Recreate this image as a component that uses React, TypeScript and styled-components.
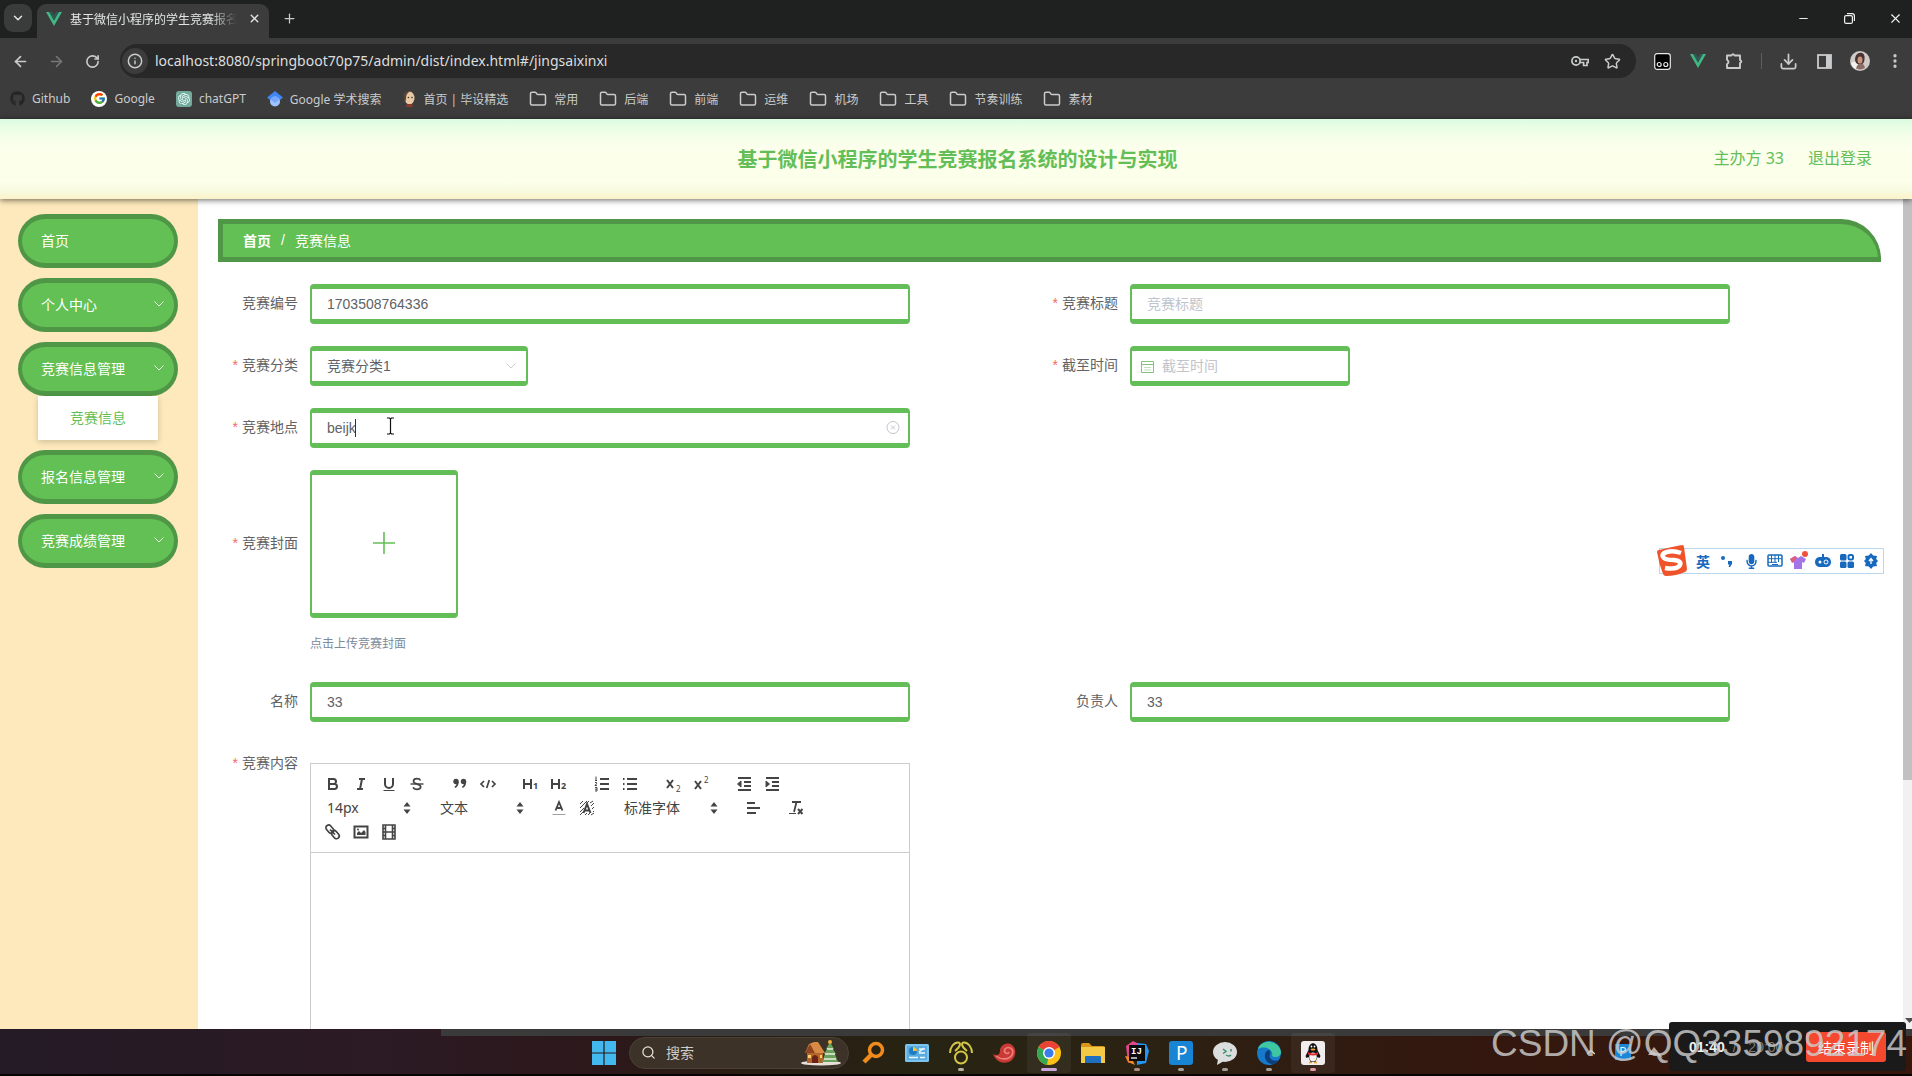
import React from "react";
import styled, { createGlobalStyle } from "styled-components";
import {
  ArrowLeft, ArrowRight, ChevronDown, ChevronUp, Download, Folder, Info, Minus, MoreVertical, Plus, RotateCw, Search, X, Star,
} from "lucide-react";
import { FaGithub, FaMicrophone } from "react-icons/fa";
import { FcGoogle } from "react-icons/fc";
import { SiOpenai } from "react-icons/si";

const GREEN = "#64be57";
const DARK_GREEN = "#4f9746";
const UI_FONT = `"Noto Sans", "Noto Sans CJK SC", sans-serif`;
const PAGE_FONT = `"Liberation Sans", "Noto Sans CJK SC", sans-serif`;

const Global = createGlobalStyle`
  *, *::before, *::after { box-sizing: border-box; }
  body { margin: 0; font-family: ${PAGE_FONT}; font-size: 14px; overflow: hidden; }
  button, input, select { font: inherit; margin: 0; }
  button { border: 0; padding: 0; background: none; color: inherit; cursor: pointer; }
  a { color: inherit; text-decoration: none; }
  svg { display: block; flex: none; }
`;

const Screen = styled.div`
  position: relative;
  display: flex;
  flex-direction: column;
  height: 100vh;
  overflow: hidden;
  background: #fff;
`;

/* ---------- browser chrome ---------- */

const Chrome = styled.header`
  flex: none;
  background: #3c3c3c;
  color: #c9cbcc;
  font-family: ${UI_FONT};
  font-size: 12px;
`;

const TabStrip = styled.div`
  display: flex;
  align-items: flex-end;
  height: 38px;
  padding: 0 9px 0 4px;
  background: #1f2020;
`;

const TabSearch = styled.button`
  display: grid;
  place-items: center;
  align-self: flex-start;
  width: 28px;
  height: 28px;
  margin: 4px 5px 0 0;
  border-radius: 9px;
  background: #3a3b3b;
  color: #e6e6e6;
`;

const Tab = styled.div`
  display: flex;
  align-items: center;
  width: 232px;
  height: 34px;
  padding: 0 8px 5px 9px;
  border-radius: 9px 9px 0 0;
  background: #3c3c3c;
  color: #e4e6e6;
`;

const TabTitle = styled.span`
  flex: 1;
  margin: 0 10px 0 8px;
  overflow: hidden;
  white-space: nowrap;
  mask-image: linear-gradient(90deg, #000 84%, transparent);
`;

const PlainButton = styled.button<{ $w?: number }>`
  display: grid;
  place-items: center;
  width: ${(p) => p.$w ?? 16}px;
  height: 28px;
`;

const StripButtons = styled.div`
  display: flex;
  align-items: center;
  height: 34px;
  padding: 0 0 6px 12px;
`;

const WindowButtons = styled(StripButtons)`
  gap: 30px;
  margin-left: auto;
  color: #f0f0f0;
`;

const Toolbar = styled.div`
  display: flex;
  align-items: center;
  height: 46px;
  padding-left: 2px;
`;

const Omnibox = styled.div`
  display: flex;
  align-items: center;
  flex: 1;
  height: 34px;
  margin: 0 8px 0 10px;
  padding: 0 8px 0 2px;
  border-radius: 17px;
  background: #282828;
`;

const SiteInfo = styled.button`
  display: grid;
  place-items: center;
  width: 26px;
  height: 26px;
  margin-right: 7px;
  border-radius: 13px;
  background: #3c3c3c;
`;

const Address = styled.input`
  flex: 1;
  min-width: 0;
  border: 0;
  outline: 0;
  padding: 0 0 2px;
  background: none;
  color: #dcdedf;
  font-family: ${UI_FONT};
  font-size: 14px;
`;

const Divider = styled.span`
  width: 1px;
  height: 16px;
  margin: 0 8px 0 9px;
  background: #5d5e5f;
`;

const Bookmarks = styled.nav`
  display: flex;
  align-items: center;
  gap: 21px;
  height: 35px;
  padding: 0 10px 6px;
`;

const Bookmark = styled.a`
  display: flex;
  align-items: center;
  gap: 7px;
  white-space: nowrap;
`;

const VueLogo = ({ size = 16 }: { size?: number }) => (
  <svg width={size} height={size} viewBox="0 0 16 16">
    <path d="M0 1h3.2L8 9.4 12.8 1H16L8 15z" fill="#41b883" />
    <path d="M3.2 1H6l2 3.4L10 1h2.8L8 9.4z" fill="#2f5a55" />
  </svg>
);

const ScholarLogo = () => (
  <svg width="16" height="16" viewBox="0 0 16 16">
    <path d="M8 0L0 6.5 3 9h10l3-2.5z" fill="#4285f4" />
    <circle cx="8" cy="10.5" r="5" fill="#a0c3ff" />
    <path d="M3.4 8.6a5 5 0 019.2 0L8 12z" fill="#76a7fa" />
  </svg>
);

const FaceLogo = () => (
  <svg width="14" height="16" viewBox="1 0 14 16">
    <ellipse cx="8.5" cy="7" rx="5" ry="6.5" fill="#e8c9a4" />
    <path d="M3 8C1 2 6-1 9 .6 6 2 5 4 5 8l-1 4z" fill="#5a4433" />
    <path d="M5 16l1-3h5l1 3z" fill="#8a3a2c" />
    <circle cx="7.4" cy="6.5" r=".8" fill="#3d2c22" />
    <circle cx="11" cy="6.5" r=".8" fill="#3d2c22" />
  </svg>
);

const IconTile = styled.span<{ $bg: string; $round?: boolean }>`
  display: grid;
  place-items: center;
  width: 16px;
  height: 16px;
  border-radius: ${(p) => (p.$round ? 8 : 3)}px;
  background: ${(p) => p.$bg};
  color: #e9fff7;
`;

const folders = ["常用", "后端", "前端", "运维", "机场", "工具", "节奏训练", "素材"];

const BrowserChrome = () => (
  <Chrome>
    <TabStrip>
      <TabSearch aria-label="搜索标签页"><ChevronDown size={14} strokeWidth={2.5} /></TabSearch>
      <Tab>
        <VueLogo />
        <TabTitle>基于微信小程序的学生竞赛报名</TabTitle>
        <PlainButton aria-label="关闭标签页" $w={14}><X size={13} strokeWidth={2.5} /></PlainButton>
      </Tab>
      <StripButtons>
        <PlainButton aria-label="新标签页"><Plus size={15} /></PlainButton>
      </StripButtons>
      <WindowButtons>
        <PlainButton aria-label="最小化"><Minus size={13} strokeWidth={1.8} /></PlainButton>
        <PlainButton aria-label="还原">
          <svg width="11" height="11" viewBox="0 0 11 11" fill="none" stroke="currentColor" strokeWidth="1.2">
            <rect x=".6" y="2.6" width="7.8" height="7.8" rx="1.5" />
            <path d="M3 .6h5a2.4 2.4 0 012.4 2.4v5" />
          </svg>
        </PlainButton>
        <PlainButton aria-label="关闭"><X size={15} strokeWidth={1.8} /></PlainButton>
      </WindowButtons>
    </TabStrip>
    <Toolbar>
      <PlainButton aria-label="后退" $w={36}><ArrowLeft size={17} strokeWidth={2.4} /></PlainButton>
      <PlainButton aria-label="前进" $w={36}><ArrowRight size={17} strokeWidth={2.2} color="#767778" /></PlainButton>
      <PlainButton aria-label="刷新" $w={36}><RotateCw size={15} strokeWidth={2.6} /></PlainButton>
      <Omnibox>
        <SiteInfo aria-label="网站信息"><Info size={16} strokeWidth={2.2} /></SiteInfo>
        <Address aria-label="地址栏" defaultValue="localhost:8080/springboot70p75/admin/dist/index.html#/jingsaixinxi" />
        <PlainButton aria-label="密码" $w={32}>
          <svg width="18" height="12" viewBox="0 0 18 12" fill="none" stroke="currentColor" strokeWidth="1.7">
            <circle cx="5" cy="6" r="4.1" />
            <circle cx="5" cy="6" r="1.2" fill="currentColor" stroke="none" />
            <path d="M9 4.5h8.2v3H16v3h-3.4v-3H9" />
          </svg>
        </PlainButton>
        <PlainButton aria-label="收藏" $w={32}><Star size={17} strokeWidth={2.1} /></PlainButton>
      </Omnibox>
      <PlainButton aria-label="脚本扩展" $w={36}>
        <svg width="17" height="17" viewBox="0 0 17 17">
          <rect x=".7" y=".7" width="15.6" height="15.6" rx="2.5" fill="#000" stroke="#e8e8e8" strokeWidth="1.2" />
          <g fill="none" stroke="#e8e8e8" strokeWidth="1.2"><circle cx="5.2" cy="11.5" r="2" /><circle cx="11.8" cy="11.5" r="2" /></g>
        </svg>
      </PlainButton>
      <PlainButton aria-label="Vue 开发工具" $w={36}><VueLogo /></PlainButton>
      <PlainButton aria-label="扩展程序" $w={36}>
        <svg width="18" height="18" viewBox="0 0 18 18" fill="none" stroke="currentColor" strokeWidth="1.9" strokeLinejoin="round">
          <path d="M2 3.500h4.500Q8 .8 9.500 3.500H15V8q2.700 1.500 0 3V16H2v-3.700q3-2.300 0-4.600z" />
        </svg>
      </PlainButton>
      <Divider />
      <PlainButton aria-label="下载" $w={36}><Download size={19} strokeWidth={2.2} /></PlainButton>
      <PlainButton aria-label="侧边栏" $w={36}>
        <svg width="15" height="15" viewBox="0 0 15 15"><rect x="1" y="1" width="13" height="13" fill="none" stroke="currentColor" strokeWidth="1.8" /><path d="M9 1h5v13H9z" fill="currentColor" /></svg>
      </PlainButton>
      <PlainButton aria-label="用户" $w={36}>
        <svg width="20" height="20" viewBox="0 0 20 20">
          <circle cx="10" cy="10" r="10" fill="#cfc9c7" />
          <path d="M1 12q4-3 7 1l1 6q-6-1-8-7z" fill="#f4f1f0" />
          <path d="M5 9c0-5 3-8 7-7 3 1 3 5 2 9l-3 4-5-3z" fill="#4a3431" />
          <ellipse cx="10" cy="9" rx="2.500" ry="3.500" fill="#c99581" />
          <path d="M6 17.500c1-4 3-5 5-5s3 1 4 4.500a10 10 0 01-9 .5z" fill="#8b6c68" />
        </svg>
      </PlainButton>
      <PlainButton aria-label="菜单" $w={34}><MoreVertical size={18} strokeWidth={2.4} /></PlainButton>
    </Toolbar>
    <Bookmarks aria-label="书签">
      <Bookmark href="#"><FaGithub size={15} color="#232526" />Github</Bookmark>
      <Bookmark href="#"><IconTile $bg="#fff" $round><FcGoogle size={13} /></IconTile>Google</Bookmark>
      <Bookmark href="#"><IconTile $bg="#74aa9c"><SiOpenai size={12} /></IconTile>chatGPT</Bookmark>
      <Bookmark href="#"><ScholarLogo />Google 学术搜索</Bookmark>
      <Bookmark href="#"><FaceLogo />首页 | 毕设精选</Bookmark>
      {folders.map((f) => (
        <Bookmark href="#" key={f}><Folder size={18} strokeWidth={2} />{f}</Bookmark>
      ))}
    </Bookmarks>
  </Chrome>
);

/* ---------- admin page ---------- */

const Banner = styled.header`
  position: relative;
  z-index: 1;
  display: grid;
  grid-template-columns: 1fr auto 1fr;
  align-items: center;
  flex: none;
  height: 80px;
  padding: 2px 40px 0 43px;
  background: linear-gradient(180deg, #dbfbe0 0, #e8fee5 8px, #f4feea 18px, #fbffeb 28px, #fcffea 62px, #f8fae0 72px, #fcf2c8 80px);
  box-shadow: 0 1px 6px rgba(0, 0, 0, 0.6);
  color: ${GREEN};
  font-family: ${UI_FONT};
`;

const BannerTitle = styled.h1`
  grid-column: 2;
  margin: 0;
  font-size: 20px;
  line-height: 28px;
`;

const BannerLinks = styled.div`
  display: flex;
  justify-content: flex-end;
  gap: 24px;
  font-size: 16px;
  line-height: 24px;
  padding-bottom: 4px;
`;

const Page = styled.div`
  display: flex;
  flex: 1;
  min-height: 0;
`;

const Sidebar = styled.nav`
  display: flex;
  flex-direction: column;
  gap: 10px;
  flex: none;
  width: 198px;
  padding: 15px 20px 0 18px;
  background: #fde9bc;
`;

const MenuButton = styled.button`
  display: flex;
  align-items: center;
  justify-content: space-between;
  width: 100%;
  height: 54px;
  padding: 0 9px 2px 19px;
  border: solid ${DARK_GREEN};
  border-width: 5px 4px;
  border-radius: 30px;
  background: #62c054;
  color: #fff;
`;

const SubMenu = styled.a`
  display: block;
  width: 120px;
  margin: 0 auto;
  line-height: 44px;
  background: #fff;
  box-shadow: 0 2px 6px rgba(0, 0, 0, 0.18);
  color: ${GREEN};
  text-align: center;
`;

const Main = styled.main`
  flex: 1;
  min-width: 0;
  overflow: hidden;
  padding: 20px 22px 0 20px;
`;

const Breadcrumb = styled.nav`
  display: flex;
  align-items: center;
  height: 43px;
  padding: 0 0 2px 20px;
  border: solid ${DARK_GREEN};
  border-width: 5px 3px 5px 5px;
  border-radius: 0 40px 0 0;
  background: #62c054;
  color: #fff;
`;

const Slash = styled.span`
  margin: 0 10px;
`;

const Form = styled.form`
  display: grid;
  grid-template-columns: 1fr 1fr;
  row-gap: 22px;
  padding: 22px 11px 0 12px;
`;

const Item = styled.div<{ $wide?: boolean }>`
  display: grid;
  grid-template-columns: 80px 1fr;
  grid-column: ${(p) => (p.$wide ? "1 / -1" : "auto")};
`;

const Label = styled.label<{ $required?: boolean; $line?: number }>`
  padding-right: 12px;
  color: #606266;
  line-height: ${(p) => p.$line ?? 38}px;
  text-align: right;
  white-space: nowrap;
  &::before {
    content: ${(p) => (p.$required ? '"*"' : "none")};
    margin-right: 4px;
    color: #f56c6c;
  }
`;

const boxed = `
  border: solid ${GREEN};
  border-width: 5px 2px;
  border-radius: 4px;
  background: #fff;
  color: #606266;
`;

const Field = styled.div<{ $w?: number }>`
  position: relative;
  width: ${(p) => p.$w ?? 600}px;
  max-width: 100%;
  color: #c0c4cc;
`;

const Input = styled.input<{ $icon?: boolean }>`
  ${boxed}
  display: block;
  width: 100%;
  height: 40px;
  padding: 0 15px 0 ${(p) => (p.$icon ? 30 : 15)}px;
  outline: 0;
  &::placeholder { color: #c0c4cc; }
`;

const Select = styled.select`
  ${boxed}
  display: block;
  width: 100%;
  height: 40px;
  padding: 0 30px 0 15px;
  appearance: none;
`;

const Overlay = styled.span<{ $left?: number; $right?: number }>`
  position: absolute;
  top: 0;
  bottom: 0;
  left: ${(p) => (p.$left === undefined ? "auto" : `${p.$left}px`)};
  right: ${(p) => (p.$right === undefined ? "auto" : `${p.$right}px`)};
  display: grid;
  place-items: center;
  pointer-events: none;
`;

const Upload = styled.button`
  ${boxed}
  display: grid;
  place-items: center;
  width: 148px;
  height: 148px;
  color: ${GREEN};
`;

const Tip = styled.p`
  margin: 12px 0 2px;
  color: #7d8a99;
  font-size: 12px;
  line-height: 28px;
`;

const Editor = styled.div`
  width: 600px;
  max-width: 100%;
  height: 400px;
  margin-top: 19px;
  border: 1px solid #ccc;
`;

const EditorBar = styled.div`
  display: flex;
  flex-wrap: wrap;
  padding: 8px;
  border-bottom: 1px solid #ccc;
  color: #444;
  font-family: ${UI_FONT};
`;

const Formats = styled.span`
  display: flex;
  margin-right: 15px;
`;

const Tool = styled.button`
  display: grid;
  place-items: center;
  width: 28px;
  height: 24px;
`;

const Picker = styled.span<{ $w: number }>`
  position: relative;
  width: ${(p) => p.$w}px;
  height: 24px;
`;

const PickerSelect = styled.select`
  display: block;
  width: 100%;
  height: 24px;
  padding: 0 20px 2px 8px;
  border: 0;
  background: none;
  color: #444;
  appearance: none;
`;

const glyph = { fontFamily: "Noto Sans, sans-serif", fill: "#444", stroke: "none" };

const toolArt: Record<string, React.ReactNode> = {
  粗体: <><path d="M5 4h4.5a2.5 2.5 0 010 5H5zM5 9h5.5a2.5 2.5 0 010 5H5z" /></>,
  斜体: <><path d="M7 4h6M5 14h6M8 14l2-10" /></>,
  下划线: <><path d="M5 3v6a4 4 0 008 0V3" /><path d="M3.5 15.5h11" strokeWidth="1" /></>,
  删除线: <><path d="M2.5 9h13" strokeWidth="1.4" /><path d="M12.5 5.5C12 4.3 10.5 3.7 9 3.7c-2 0-3.5 1-3.5 2.6C5.5 8 7.5 8.5 9 9s3.7 1 3.7 2.8c0 1.6-1.7 2.6-3.7 2.6-1.8 0-3.3-.7-3.8-2.2" strokeWidth="1.7" /></>,
  引用: <g fill="#444" stroke="none"><circle cx="5" cy="6.5" r="2.7" /><circle cx="12.5" cy="6.5" r="2.7" /><path d="M7.7 6.5c0 3-1 5.5-3.5 6.5l-.8-1.2C5 11 5.700 9.500 5.500 7.500zM15.200 6.500c0 3-1 5.500-3.500 6.500l-.8-1.200c1.600-.8 2.300-2.300 2.100-4.300z" /></g>,
  代码: <><path d="M5 6L2 9l3 3M13 6l3 3-3 3M10.3 5l-2.6 8" strokeWidth="1.7" /></>,
  标题1: <><path d="M2 4v10M9 4v10M2 9h7" /><text x="11" y="14" fontSize="9" fontWeight="700" style={glyph}>1</text></>,
  标题2: <><path d="M2 4v10M9 4v10M2 9h7" /><text x="11" y="14" fontSize="9" fontWeight="700" style={glyph}>2</text></>,
  有序列表: <><path d="M7 4h9M7 9h9M7 14h9" /><path d="M3 1.500v4M2 5.500h2M2 7.500h1.500v1.200L2 10.500h2M2 12.500h2v3.500H2M2 14.200h2" strokeWidth="1" /></>,
  无序列表: <><path d="M6 4h10M6 9h10M6 14h10M2 4h1.5M2 9h1.5M2 14h1.5" /></>,
  下标: <><path d="M3 5l6 8M9 5l-6 8" /><text x="12" y="17" fontSize="8" style={glyph}>2</text></>,
  上标: <><path d="M3 6l6 8M9 6l-6 8" /><text x="12" y="8" fontSize="8" style={glyph}>2</text></>,
  减少缩进: <><path d="M3 3h13M9 7h7M9 11h7M3 15h13" /><path d="M6 6v6L2.5 9z" fill="#444" strokeWidth="1" /></>,
  增加缩进: <><path d="M3 3h13M9 7h7M9 11h7M3 15h13" /><path d="M3 6v6l3.5-3z" fill="#444" strokeWidth="1" /></>,
  字体颜色: <><path d="M5.5 11.5L9 3l3.5 8.500M6.500 9h5" strokeWidth="1.8" /><path d="M2.5 15.500h13" strokeWidth="1" opacity=".5" /></>,
  背景颜色: <><path d="M2 5l3-3M2 9l7-7M2 13l4-4M2 16l3-3M9 4l2-2M12 4l3-2M13 7l3-3M14 10l2-2M15 13l1-1M7 16l2-2M10 16l2-2M13 16l3-2" strokeWidth="1" /><path d="M5.5 14L9 5l3.5 9M6.500 11.500h5" strokeWidth="2" /></>,
  对齐: <path d="M3 4h8M3 9h13M3 14h9" />,
  清除格式: <><path d="M5 3h9M9.5 3L7 13" strokeWidth="1.8" /><path d="M2 14.500h7" strokeWidth="1" /><path d="M11 10l4.500 5M15.500 10L11 15" strokeWidth="1.9" /></>,
  链接: <g strokeWidth="1.7"><rect x="3" y="1.500" width="5.500" height="9" rx="2.700" transform="rotate(-40 6 6)" /><rect x="8.500" y="7" width="5.500" height="9" rx="2.700" transform="rotate(-40 11.500 11.500)" /><path d="M6 6.500l5 5" /></g>,
  图片: <><path d="M2.5 3.500h13v11h-13z" strokeWidth="2" /><path d="M5 12v-2l2-2 2 2 3-3 1.500 2v3z" fill="#444" stroke="none" /><circle cx="6" cy="6.500" r="1" fill="#444" stroke="none" /></>,
  视频: <><path d="M3 2h12v14H3zM5.5 2v14M12.500 2v14M5.500 9h7M3 5.500h2.500M3 9h2.500M3 12.500h2.500M12.500 5.500H15M12.500 9H15M12.500 12.500H15" strokeWidth="1.6" /></>,
};

const Tools = ({ names }: { names: string[] }) => (
  <Formats>
    {names.map((n) => (
      <Tool type="button" key={n} aria-label={n}>
        <svg width="18" height="18" viewBox="0 0 18 18" fill="none" stroke="#444" strokeWidth="2">{toolArt[n]}</svg>
      </Tool>
    ))}
  </Formats>
);

const ToolSelect = ({ label, value, width }: { label: string; value: string; width: number }) => (
  <Formats>
    <Picker $w={width}>
      <PickerSelect aria-label={label}><option>{value}</option></PickerSelect>
      <Overlay $right={1}>
        <svg width="18" height="18" viewBox="0 0 18 18" fill="#444"><path d="M9 3l3.5 4.500h-7zM9 15l3.500-4.500h-7z" /></svg>
      </Overlay>
    </Picker>
  </Formats>
);

const ScrollTrack = styled.div`
  display: flex;
  flex-direction: column;
  justify-content: space-between;
  flex: none;
  width: 9px;
  background: #f1f1f1;
  color: #505050;
`;

const ScrollThumb = styled.div`
  height: 70%;
  background: #c1c1c1;
`;

const ThinChevron = () => (
  <svg width="12" height="12" viewBox="0 0 12 12" fill="none" stroke="currentColor" strokeWidth="1" opacity=".85"><path d="M1.500 3.500L6 8l4.500-4.500" /></svg>
);

const menu = [
  { name: "首页" },
  { name: "个人中心", more: true },
  { name: "竞赛信息管理", more: true, child: "竞赛信息" },
  { name: "报名信息管理", more: true },
  { name: "竞赛成绩管理", more: true },
];

const AdminPage = () => (
  <>
    <Banner>
      <BannerTitle>基于微信小程序的学生竞赛报名系统的设计与实现</BannerTitle>
      <BannerLinks><span>主办方 33</span><a href="#">退出登录</a></BannerLinks>
    </Banner>
    <Page>
      <Sidebar aria-label="主菜单">
        {menu.map((m) => (
          <div key={m.name}>
            <MenuButton>{m.name}{m.more && <ThinChevron />}</MenuButton>
            {m.child && <SubMenu href="#">{m.child}</SubMenu>}
          </div>
        ))}
      </Sidebar>
      <Main>
        <Breadcrumb aria-label="位置"><b>首页</b><Slash>/</Slash><span>竞赛信息</span></Breadcrumb>
        <Form>
          <Item>
            <Label htmlFor="code">竞赛编号</Label>
            <Field><Input id="code" defaultValue="1703508764336" /></Field>
          </Item>
          <Item>
            <Label htmlFor="title" $required>竞赛标题</Label>
            <Field><Input id="title" placeholder="竞赛标题" /></Field>
          </Item>
          <Item>
            <Label htmlFor="kind" $required>竞赛分类</Label>
            <Field $w={218}>
              <Select id="kind"><option>竞赛分类1</option></Select>
              <Overlay $right={11}><ThinChevron /></Overlay>
            </Field>
          </Item>
          <Item>
            <Label htmlFor="deadline" $required>截至时间</Label>
            <Field $w={220}>
              <Input id="deadline" placeholder="截至时间" $icon />
              <Overlay $left={11}>
                <svg width="13" height="13" viewBox="0 0 13 13" fill="none" stroke="#86c07d"><path d="M.5 1.500h12v11H.5zM.5 4.500h12" /><path d="M3 7.500h7M3 10h7" opacity=".5" /></svg>
              </Overlay>
            </Field>
          </Item>
          <Item $wide>
            <Label htmlFor="place" $required>竞赛地点</Label>
            <Field>
              <Input id="place" defaultValue="beijk" />
              <Overlay $left={45}>
                <svg width="1" height="18" viewBox="0 0 1 18"><path d="M0 0h1v18H0z" fill="#333" /></svg>
              </Overlay>
              <Overlay $left={76}>
                <svg width="9" height="22" viewBox="0 0 9 22" fill="none" stroke="#111" strokeWidth="1.2"><path d="M1 1h2.500l1 1 1-1H8M1 17h2.500l1-1 1 1H8M4.500 2v14" /></svg>
              </Overlay>
              <Overlay $right={10}>
                <svg width="14" height="14" viewBox="0 0 14 14" fill="none" stroke="#c0c4cc"><circle cx="7" cy="6.5" r="6" /><path d="M5 4.500l4 4M9 4.500l-4 4" /></svg>
              </Overlay>
            </Field>
          </Item>
          <Item $wide>
            <Label htmlFor="cover" $required $line={146}>竞赛封面</Label>
            <div>
              <Upload id="cover" type="button" aria-label="上传竞赛封面">
                <svg width="24" height="24" viewBox="0 0 24 24" stroke="currentColor" strokeWidth="1.6"><path d="M12 0v22M1 11h22" /></svg>
              </Upload>
              <Tip>点击上传竞赛封面</Tip>
            </div>
          </Item>
          <Item>
            <Label htmlFor="org">名称</Label>
            <Field><Input id="org" defaultValue="33" /></Field>
          </Item>
          <Item>
            <Label htmlFor="owner">负责人</Label>
            <Field><Input id="owner" defaultValue="33" /></Field>
          </Item>
          <Item $wide>
            <Label as="span" $required>竞赛内容</Label>
            <Editor>
              <EditorBar>
                <Tools names={["粗体", "斜体", "下划线", "删除线"]} />
                <Tools names={["引用", "代码"]} />
                <Tools names={["标题1", "标题2"]} />
                <Tools names={["有序列表", "无序列表"]} />
                <Tools names={["下标", "上标"]} />
                <Tools names={["减少缩进", "增加缩进"]} />
                <ToolSelect label="字号" value="14px" width={98} />
                <ToolSelect label="段落" value="文本" width={98} />
                <Tools names={["字体颜色", "背景颜色"]} />
                <ToolSelect label="字体" value="标准字体" width={108} />
                <Tools names={["对齐"]} />
                <Tools names={["清除格式"]} />
                <Tools names={["链接", "图片", "视频"]} />
              </EditorBar>
            </Editor>
          </Item>
        </Form>
      </Main>
      <ScrollTrack>
        <ScrollThumb />
        <svg width="9" height="16" viewBox="0 0 9 16" fill="currentColor"><path d="M2 5h9L6.500 10z" /></svg>
      </ScrollTrack>
    </Page>
  </>
);

/* ---------- desktop overlays ---------- */

const ImeBar = styled.div`
  position: absolute;
  top: 548px;
  right: 28px;
  z-index: 2;
  display: flex;
  align-items: center;
  height: 26px;
  border: 1px solid #b9d7ee;
  background: #fff;
  color: #1769bd;
  font-weight: 700;
  font-size: 14px;
`;

const ImeLogo = styled.span`
  margin: -3px 3px 0 -4px;
`;

const ImeButton = styled.button`
  display: grid;
  place-items: center;
  width: 24px;
  height: 24px;
`;

const Ime = () => (
  <ImeBar>
    <ImeLogo>
      <svg width="32" height="32" viewBox="0 0 32 32">
        <path d="M3 6Q15 3 26 1q2 0 2 2l3 22q0 2-2 3-9 4-19 4-2 0-3-2Q3 20 1 8q0-2 2-2z" fill="#f0532a" />
        <path d="M25 9q-8-3-14-1-7 2-3 6 2 2 10 2 8 1 6 5-3 5-15 3" fill="none" stroke="#fff" strokeWidth="4.5" />
      </svg>
    </ImeLogo>
    <ImeButton>英</ImeButton>
    <ImeButton aria-label="标点"><svg width="14" height="14" viewBox="0 0 14 14" fill="currentColor"><circle cx="3" cy="4" r="2" /><path d="M8 7h4v3l-2 3H8.500l1-2.500H8z" /></svg></ImeButton>
    <ImeButton aria-label="语音"><FaMicrophone size={15} /></ImeButton>
    <ImeButton aria-label="键盘"><svg width="16" height="14" viewBox="0 0 16 14" fill="none" stroke="currentColor" strokeWidth="1.5"><rect x="1" y="1" width="14" height="11" rx="1" /><path d="M1 4.700h14M1 8.300h9M4.500 1v8M8 1v8M11.500 1v7M5 10.500h6" strokeWidth="1" /></svg></ImeButton>
    <ImeButton aria-label="皮肤">
      <svg width="18" height="20" viewBox="0 0 18 20"><path d="M0 8l5-3 3 2 3-2 5 3-2 4-2-1v7H4v-7l-2 1z" fill="#a374e8" /><path d="M0 8l5-3 2 1.500L3 12z" fill="#e0607a" /><circle cx="15" cy="3" r="3" fill="#f2503f" /></svg>
    </ImeButton>
    <ImeButton aria-label="助手"><svg width="16" height="14" viewBox="0 0 16 14"><path d="M7 0h2v3h3q4 1 4 5t-4 5H4Q0 12 0 8t4-5h3z" fill="currentColor" /><circle cx="5" cy="8" r="1.5" fill="#fff" /><circle cx="11" cy="8" r="2" fill="none" stroke="#fff" /></svg></ImeButton>
    <ImeButton aria-label="工具箱"><svg width="14" height="14" viewBox="0 0 14 14" fill="currentColor"><rect width="6.500" height="6.500" rx="1.5" /><rect x="8.500" y="1" width="4.500" height="4.500" rx="1.5" fill="none" stroke="currentColor" strokeWidth="2" /><rect y="7.500" width="6.500" height="6.500" rx="1.5" /><rect x="7.500" y="7.500" width="6.500" height="6.500" rx="1.5" /></svg></ImeButton>
    <ImeButton aria-label="设置"><svg width="14" height="16" viewBox="0 0 14 16"><path d="M7 0l2.200 2.500L13 3l-.8 3L14 8l-1.800 2 .8 3-3.800.5L7 16l-2.200-2.500L1 13l.8-3L0 8l1.800-2L1 3l3.800-.5z" fill="currentColor" /><path d="M7 11V6M5 8l2-2.500L9 8" fill="none" stroke="#fff" strokeWidth="1.3" /></svg></ImeButton>
  </ImeBar>
);

const Taskbar = styled.footer`
  position: relative;
  display: flex;
  align-items: center;
  justify-content: center;
  flex: none;
  height: 47px;
  padding: 2px 0 0 5px;
  border-bottom: 2px solid #050304;
  background: linear-gradient(#3a3a3b, #3a3a3b) 441px 0 / 100% 7px no-repeat,
    linear-gradient(90deg, #241b26 0, #2c1a24 20%, #2c181a 32%, #2a1c14 38%, #272413 48%, #2b2213 60%, #33180f 75%, #37160c 100%);
  color: #e8e2dc;
  font-family: ${UI_FONT};
`;

const AppButton = styled.button<{ $active?: boolean; $dot?: string; $long?: boolean }>`
  position: relative;
  display: grid;
  place-items: center;
  flex: none;
  width: 44px;
  height: 40px;
  border-radius: 4px;
  background: ${(p) => (p.$active ? "rgba(255, 255, 255, 0.05)" : "none")};
  &::after {
    content: "";
    position: absolute;
    left: 50%;
    bottom: 2px;
    width: ${(p) => (p.$long ? 16 : 6)}px;
    height: 3px;
    border-radius: 2px;
    background: ${(p) => p.$dot ?? "none"};
    transform: translateX(-50%);
  }
`;

const SearchBox = styled.label`
  display: flex;
  align-items: center;
  width: 220px;
  height: 32px;
  margin: 0 2px 0 3px;
  padding: 0 6px 0 11px;
  border: 1px solid #4a4137;
  border-radius: 16px;
  background: #3c3228;
`;

const SearchInput = styled.input`
  flex: 1;
  min-width: 0;
  border: 0;
  outline: 0;
  padding: 0 0 0 10px;
  background: none;
  font-size: 14px;
  color: inherit;
  &::placeholder { color: #d3ccc5; opacity: 1; }
`;

const Tray = styled.div`
  position: absolute;
  right: 248px;
  top: 15px;
  display: flex;
  align-items: center;
  gap: 17px;
`;

const TrayBadge = styled.span`
  width: 16px;
  height: 16px;
  background: #1c86d8;
  color: #e8f4ff;
  font-size: 12px;
  line-height: 16px;
  text-align: center;
`;

const art24 = { width: 24, height: 24, viewBox: "0 0 24 24" };

const apps: { name: string; art: React.ReactNode; dot?: string; active?: boolean; long?: boolean }[] = [
  { name: "文件搜索", art: <svg {...art24} fill="none" stroke="#f08a1c"><circle cx="15" cy="9" r="6.5" strokeWidth="3.5" /><path d="M10 14l-7 7" strokeWidth="4.5" /></svg> },
  { name: "控制面板", art: <svg {...art24}><rect x="0" y="3" width="24" height="18" rx="1.5" fill="#7cc4ee" /><rect x="2" y="5" width="20" height="14" fill="#58acdf" /><circle cx="8" cy="10" r="4" fill="#1f7cc4" /><path d="M8 10V6a4 4 0 014 4z" fill="#f0c43c" /><path d="M14 11l5-4M14 8h6M14 12h6M4 16.500h9M15 16.500h5" stroke="#eaf6fd" strokeWidth="1.5" /></svg> },
  { name: "数据库", dot: "#b5ae9d", art: <svg {...art24} fill="none" stroke="#d2c545" strokeWidth="2"><circle cx="12" cy="16.5" r="6" /><path d="M1 12C1 6 5 1.500 9 1.500c3 0 3 4-3 8.500M23 12c0-6-4-10.500-8-10.500-3 0-3 4 3 8.500" /></svg> },
  { name: "螺旋", art: <svg {...art24}><path d="M0 13c6 3 7-1 7-4 1-6 8-8 12-5 5 4 4 11 0 15-6 5-16 3-19-6z" fill="#c93a36" /><path d="M3 15c5 4 13 4 16-1 3-7-4-9-7-6-2 4 3 6 4 3" fill="none" stroke="#f0807a" strokeWidth="1.6" /></svg> },
  { name: "Chrome", dot: "#caa6dc", active: true, long: true, art: <svg {...art24}><circle cx="12" cy="12" r="12" fill="#fbc116" /><path d="M12 12L1.600 6A12 12 0 0122.400 6z" fill="#ea4335" /><path d="M12 12l-2 11.800A12 12 0 011.600 6z" fill="#34a853" /><circle cx="12" cy="12" r="6" fill="#fff" /><circle cx="12" cy="12" r="4.6" fill="#3b7ded" /></svg> },
  { name: "文件资源管理器", art: <svg {...art24}><path d="M0 4q0-2 2-2h6l3 3h11q2 0 2 2v14H0z" fill="#d9951c" /><path d="M0 6h24v16H0z" fill="#f5c945" /><path d="M4 22v-6q0-1 1-1h14q1 0 1 1v6z" fill="#1f6fc0" /></svg> },
  { name: "IntelliJ IDEA", dot: "#b08e88", art: <svg {...art24}><path d="M1 5l7-5 8 4-4 14-9 4z" fill="#e0468c" /><path d="M12 2l9 1 3 7-3 12-9 2z" fill="#2196f3" /><path d="M0 15l6 1 4 8-7-3z" fill="#f28a2c" /><rect x="4" y="4" width="16" height="16" fill="#0b0b0c" /><text x="6" y="13" fontSize="9" fontWeight="700" fontFamily="Liberation Mono, monospace" fill="#fff">IJ</text><path d="M6 17h6" stroke="#fff" strokeWidth="1.3" /></svg> },
  { name: "PDF 编辑器", dot: "#a3a09c", art: <svg {...art24}><rect width="24" height="24" rx="3" fill="#1784d4" /><text x="7" y="19" fontSize="19" fontFamily="Noto Sans, sans-serif" fill="#fff">P</text></svg> },
  { name: "聊天", dot: "#a3a09c", art: <svg {...art24}><ellipse cx="12" cy="11" rx="12" ry="10" fill="#dcdedd" /><path d="M5 18l-1 6 7-4z" fill="#dcdedd" /><path d="M10 8l3 2.500-3 2M18 8v2.500M13 14q3 2 5 0" fill="none" stroke="#3f8f78" strokeWidth="1.5" /></svg> },
  { name: "Edge", dot: "#a3a09c", art: <svg {...art24}><circle cx="12" cy="12" r="12" fill="#1779c9" /><path d="M1 8C4-2 22-2 24 11c0 5-6 6-9 4 2-7-8-11-14-7z" fill="#3fc8a0" /><path d="M11 9c-6 4-3 14 5 14 3 0 5-2 6-4-5 2-11-1-9-6 1-2 0-4-2-4z" fill="#0d3f7d" /></svg> },
  { name: "QQ", dot: "#e29aa6", active: true, art: <svg {...art24}><rect width="24" height="24" rx="3" fill="#f1eded" /><path d="M7.500 9c0-9 9-9 9 0l3 6-1 2-2-1-2 5h-5l-2-5-2 1-1-2z" fill="#101013" /><ellipse cx="12" cy="16" rx="3.8" ry="4.5" fill="#f6f4f3" /><path d="M7 11q5 3 10 0v2.500q-5 2-10 0z" fill="#dd2a2f" /><ellipse cx="12" cy="8.5" rx="2.500" ry="1" fill="#f2a62b" /><circle cx="10.5" cy="5.5" r=".9" fill="#fff" /><circle cx="13.5" cy="5.5" r=".9" fill="#fff" /><path d="M8 21.500h3M13 21.500h3" stroke="#f2a62b" strokeWidth="1.5" /></svg> },
];

const DesktopTaskbar = () => (
  <Taskbar>
    <AppButton aria-label="开始">
      <svg {...art24} fill="#42b8ef"><path d="M0 0h11.400v11.400H0zM12.600 0H24v11.400H12.600zM0 12.600h11.400V24H0zM12.600 12.600H24V24H12.600z" /></svg>
    </AppButton>
    <SearchBox>
      <Search size={15} strokeWidth={2} />
      <SearchInput placeholder="搜索" aria-label="搜索" />
      <svg width="42" height="26" viewBox="0 0 42 26">
        <ellipse cx="21" cy="23" rx="20" ry="2.5" fill="#e6e0d8" />
        <path d="M7 11h16v12H7z" fill="#b5652c" />
        <path d="M5 13l4-9 5-2 4 0 7 11z" fill="#d98a45" />
        <path d="M5 13l5-9 5 9z" fill="#8d4420" />
        <path d="M12 23v-6q3-4 6 0v6z" fill="#6a2416" />
        <path d="M8 15h3v3H8zM20 15h2v3h-2z" fill="#ffd36a" />
        <path d="M30 2l4 7h-1l3 5h-1l3 8H22l3-8h-1l3-5h-1z" fill="#6aa05a" />
        <path d="M27 9h6M25 14h10M24 19h12" stroke="#e8eee0" strokeWidth="1.5" />
        <circle cx="30" cy="2" r="2" fill="#f0b23c" />
      </svg>
    </SearchBox>
    {apps.map((a) => (
      <AppButton key={a.name} aria-label={a.name} $active={a.active} $dot={a.dot} $long={a.long}>{a.art}</AppButton>
    ))}
    <Tray>
      <ChevronUp size={14} />
      <TrayBadge>P</TrayBadge>
      <svg width="16" height="14" viewBox="0 0 16 14"><path d="M0 10L6 2l9 11-6-3z" fill="#b9aaa6" /></svg>
    </Tray>
  </Taskbar>
);

const Recorder = styled.div`
  position: absolute;
  right: 6px;
  bottom: 5px;
  z-index: 3;
  display: flex;
  align-items: center;
  width: 237px;
  height: 49px;
  padding: 0 20px;
  border-radius: 3px;
  background: #1a1a1b;
  color: #7b7b7b;
  font-size: 14px;
`;

const Elapsed = styled.b`
  margin-right: 8px;
  color: #f2f2f2;
  font-weight: 700;
`;

const StopButton = styled.button`
  width: 80px;
  height: 30px;
  margin-left: auto;
  border-radius: 3px;
  background: #f4482f;
  color: #fff;
  font-size: 14px;
`;

const Watermark = styled.div`
  position: absolute;
  right: 5px;
  bottom: 4px;
  z-index: 4;
  color: rgba(205, 205, 205, 0.82);
  font-size: 37px;
  line-height: 56px;
  white-space: nowrap;
  pointer-events: none;
`;

export default function App() {
  return (
    <>
      <Global />
      <Screen>
        <BrowserChrome />
        <AdminPage />
        <DesktopTaskbar />
        <Ime />
        <Recorder>
          <Elapsed>01:40</Elapsed>/&nbsp;&nbsp; 20:00
          <StopButton>结束录制</StopButton>
        </Recorder>
        <Watermark>CSDN @QQ3359892174</Watermark>
      </Screen>
    </>
  );
}
